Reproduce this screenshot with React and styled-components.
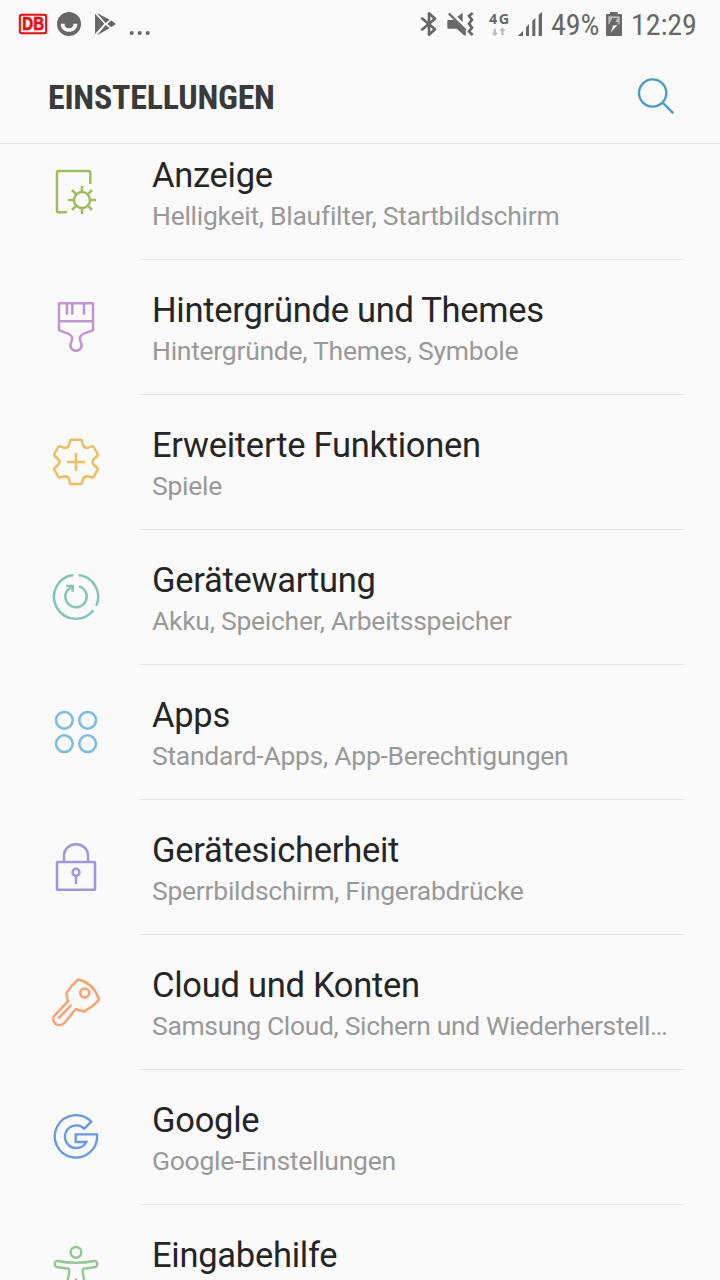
import React from "react";
import styled, { createGlobalStyle } from "styled-components";

const GlobalStyle = createGlobalStyle`
  * { box-sizing: border-box; }
  body { margin: 0; background: #fafafa; font-family: Roboto, sans-serif; }
`;

const Screen = styled.main`
  width: 720px;
  height: 1280px;
  overflow: hidden;
  background: #fafafa;
  display: flex;
  flex-direction: column;
`;

const StatusBar = styled.div`
  height: 48px;
  flex: none;
  display: flex;
  justify-content: space-between;
`;

const StatusIcons = styled.svg`
  display: block;
  flex: none;
`;

const StatusGroup = styled.div`
  display: flex;
  height: 48px;
`;

const Condensed = styled.span`
  display: block;
  flex: none;
  width: ${(p) => p.$width}px;
  margin-left: ${(p) => p.$gap || 0}px;
  font-family: "Roboto Condensed", Roboto, sans-serif;
  white-space: nowrap;
  font-size: 30px;
  letter-spacing: -0.1px;
  line-height: 50px;
  color: #686868;
`;

const Header = styled.header`
  height: 96px;
  flex: none;
  display: flex;
  justify-content: space-between;
  border-bottom: 1px solid #e2e2e2;
  padding: 0 42px 0 48px;
`;

const Heading = styled.h1`
  margin: 0;
  font-family: "Roboto Condensed", Roboto, sans-serif;
  font-size: 34px;
  letter-spacing: -0.25px;
  font-weight: 700;
  line-height: 98px;
  color: #3a3a3a;
  white-space: nowrap;
`;

const SearchButton = styled.button`
  border: 0;
  padding: 0;
  background: none;
  width: 48px;
  height: 95px;
`;

const List = styled.div`
  flex: 1;
  min-height: 0;
  overflow: hidden;
  display: flex;
  flex-direction: column;
  justify-content: flex-start;
`;

const Row = styled.div`
  flex: none;
  display: flex;
  height: 135px;
  padding: 0 36px 0 40px;
  &:first-child { margin-top: -19px; }
`;

const RowIcon = styled.svg`
  display: block;
  flex: none;
  width: 80px;
  height: 70px;
  margin: 32px 20px 0 0;
  fill: none;
  stroke: ${(p) => p.$color};
  stroke-width: 7.5;
  stroke-linejoin: round;
`;

const RowText = styled.div`
  flex: 1;
  min-width: 0;
  padding: 29px 0 0 12px;
  border-bottom: 1px solid #e4e4e4;
`;

const Title = styled.div`
  font-size: 34.5px;
  letter-spacing: -0.27px;
  line-height: 42px;
  color: #252525;
  white-space: nowrap;
`;

const Subtitle = styled.div`
  font-size: 26.5px;
  letter-spacing: ${(p) => p.$tracking || -0.27}px;
  line-height: 39px;
  color: #999;
  white-space: nowrap;
`;

const items = [
  {
    title: "Anzeige", sub: "Helligkeit, Blaufilter, Startbildschirm", color: "#9fbe5b", top: 6,
    icon: (
      <>
        <path d="M81 172H56Q51 172 51 167V53Q51 48 56 48H146Q151 48 151 53V87" />
        <circle cx="126" cy="135" r="24" />
        <path d="M126 93V111M126 159V177M84 135H102M150 135H168M96 105L109 118M143 152L156 165M156 105L143 118M109 152L96 165" />
      </>
    ),
  },
  {
    title: "Hintergründe und Themes", sub: "Hintergründe, Themes, Symbole", color: "#c394d2", top: 6,
    icon: (
      <>
        <path d="M57 40H159V121L133 130C118 136 117 145 122 156C130 171 120 182 108 182C96 182 86 171 94 156C99 145 98 136 83 130L57 121Z" />
        <path d="M57 94H159M81 42V74M97 42V74M132 42V74" />
      </>
    ),
  },
  {
    title: "Erweiterte Funktionen", sub: "Spiele", color: "#eebd60", top: 0,
    icon: (
      <>
        <path d="M94 38H122Q125 38 126 42L129 54C132 62 139 64 147 61L156 58Q159 57 161 60L173 81Q174 84 172 87L162 96C156 102 156 108 162 114L172 123Q174 126 173 128L161 149Q159 152 156 151L147 149C139 147 132 148 129 156L126 168Q125 171 122 171H94Q91 171 90 168L87 156C84 148 77 147 69 149L60 151Q57 152 55 149L43 128Q42 126 44 123L54 114C60 108 60 102 54 96L44 87Q42 84 43 81L55 60Q57 57 60 58L69 61C77 64 84 62 87 54L90 42Q91 38 94 38Z" />
        <path d="M81 105H135M108 78V132" />
      </>
    ),
  },
  {
    title: "Gerätewartung", sub: "Akku, Speicher, Arbeitsspeicher", color: "#82c7b7", top: 0,
    icon: (
      <>
        <path d="M100 39A66 66 0 1 0 160 145M116 39A66 66 0 0 1 169 131" />
        <path d="M117 73A32 32 0 1 1 83 84L96 73M79 72H98V89" strokeLinejoin="miter" />
      </>
    ),
  },
  {
    title: "Apps", sub: "Standard-Apps, App-Berechtigungen", color: "#78bce2", top: 0,
    icon: (
      <>
        <circle cx="73" cy="70" r="25" /><circle cx="143" cy="70" r="25" />
        <circle cx="73" cy="140" r="25" /><circle cx="143" cy="140" r="25" />
      </>
    ),
  },
  {
    title: "Gerätesicherheit", sub: "Sperrbildschirm, Fingerabdrücke", color: "#a393e5", top: 0,
    icon: (
      <>
        <rect x="51" y="90" width="114" height="83" rx="2" />
        <path d="M72 89V72C72 25 144 25 144 72V89M108 132V157" />
        <circle cx="108" cy="121" r="10.5" />
      </>
    ),
  },
  {
    title: "Cloud und Konten", sub: "Samsung Cloud, Sichern und Wiederherstell…", tracking: -0.35, color: "#f9a26d", top: 0,
    icon: (
      <>
        <path d="M117 38C145 45 166 66 176 94Q178 98 175 101C164 113 150 124 135 132Q133 134 130 133L107 127L73 168C66 176 54 176 46 170C38 162 38 151 45 144L84 103L79 82Q79 79 81 76C90 61 101 49 113 39Q115 37 117 38Z" />
        <circle cx="134" cy="78" r="13.5" />
        <path d="M55 154L94 114" />
      </>
    ),
  },
  {
    title: "Google", sub: "Google-Einstellungen", color: "#6499e8", top: 0,
    icon: <path strokeLinejoin="miter" strokeWidth="7" d="M153.500 59A63.500 63.500 0 1 0 171 97H107V120H139C134 130 123 138 109 138A34 34 0 1 1 133 80Z" />,
  },
  {
    title: "Eingabehilfe", color: "#93c990", top: 111,
    icon: (
      <>
        <circle cx="108" cy="157" r="16" />
        <path d="M53 183C88 190 128 190 163 183C174 182 174 199 165 201L131 206C127 207 128 215 129 222L144 292C146 302 132 305 128 295L108 239L88 295C84 305 70 302 72 292L87 222C88 215 89 207 85 206L51 201C42 199 42 182 53 183Z" />
      </>
    ),
  },
];

function NotificationIcons() {
  return (
    <StatusIcons width="160" height="48" viewBox="0 0 480 144">
      <rect x="59.500" y="44.500" width="79" height="55" rx="5" fill="#fff" stroke="#fa0009" strokeWidth="6" />
      <text x="67" y="90" fill="#fa0009" stroke="#fa0009" strokeWidth="2" fontFamily="Liberation Sans, sans-serif" fontWeight="700" fontSize="54" textLength="65" lengthAdjust="spacingAndGlyphs">DB</text>
      <circle cx="207" cy="72" r="36" fill="#686868" />
      <path d="M182 71H194Q197 73 198 76C201 87 213 87 216 76Q217 73 220 71H232C232 103 182 103 182 71Z" fill="#fafafa" />
      <path d="M194 71H220V74C220 88 194 88 194 74Z" fill="#686868" />
      <path fill="#686868" d="M285 41L313 71L285 102ZM290 38L329 59L317 69ZM333 61L348 72L333 82L322 72ZM317 75L329 85L291 106Z" />
      <g fill="#686868"><circle cx="395" cy="99" r="6" /><circle cx="419" cy="99" r="6" /><circle cx="443" cy="99" r="6" /></g>
    </StatusIcons>
  );
}

function SystemIcons() {
  return (
    <StatusIcons width="135" height="48" viewBox="0 0 405 144" fill="#686868">
      <path fill="none" stroke="#686868" strokeWidth="8" strokeLinejoin="round" d="M34 53L75 88L57 104V40L75 56L34 91" />
      <path d="M112 62Q112 60 115 60H132L168 95V106H162L140 86H115Q112 86 112 83ZM142 50L158 38V67Z" />
      <path d="M114 43L119 38L170 89L165 94Z" />
      <path fill="none" stroke="#686868" strokeWidth="8" d="M188 39L177 48L186 59L177 71L186 83L177 94L188 105" />
      <text x="237" y="73" fontFamily="Noto Sans, sans-serif" fontWeight="700" fontSize="43" textLength="60">4G</text>
      <path fill="#bdbdbd" d="M251 86H258V98H264L254.500 109L245 98H251ZM274 106H281V93H287L277.500 82L268 93H274Z" />
      <path d="M323 108L339 93V108ZM348 81L357 73V108H348ZM367 62L376 54V108H367ZM386 44L396 35V108H386Z" />
    </StatusIcons>
  );
}

function Battery() {
  return (
    <StatusIcons width="32" height="48" viewBox="570 0 96 144">
      <path fill="#686868" d="M600 36H623V42H633Q636 42 636 45V105Q636 108 633 108H591Q588 108 588 105V45Q588 42 591 42H600Z" />
      <path fill="#bdbdbd" d="M595 49H629V73H595Z" />
      <path fill="#686868" d="M607 54H622L616 67H627L601 96L608 77H596Z" />
      <path fill="#fafafa" d="M613 76H622L601 98L608 82V77Z" />
    </StatusIcons>
  );
}

export default function App() {
  return (
    <>
      <GlobalStyle />
      <Screen>
        <StatusBar>
          <NotificationIcons />
          <StatusGroup>
            <SystemIcons />
            <Condensed $width={49} $gap={6}>49%</Condensed>
            <Battery />
            <Condensed $width={89} $gap={-1}>12:29</Condensed>
          </StatusGroup>
        </StatusBar>
        <Header>
          <Heading>EINSTELLUNGEN</Heading>
          <SearchButton aria-label="Suchen">
            <svg width="48" height="95" viewBox="660 144 144 285" fill="none" stroke="#469fc1" strokeWidth="7" strokeLinecap="round">
              <circle cx="728" cy="279" r="41" />
              <path d="M758 308L788 338" />
            </svg>
          </SearchButton>
        </Header>
        <List>
          {items.map((item) => (
            <Row key={item.title}>
              <RowIcon $color={item.color} viewBox={`0 ${item.top} 240 210`}>{item.icon}</RowIcon>
              <RowText>
                <Title>{item.title}</Title>
                {item.sub && <Subtitle $tracking={item.tracking}>{item.sub}</Subtitle>}
              </RowText>
            </Row>
          ))}
        </List>
      </Screen>
    </>
  );
}
